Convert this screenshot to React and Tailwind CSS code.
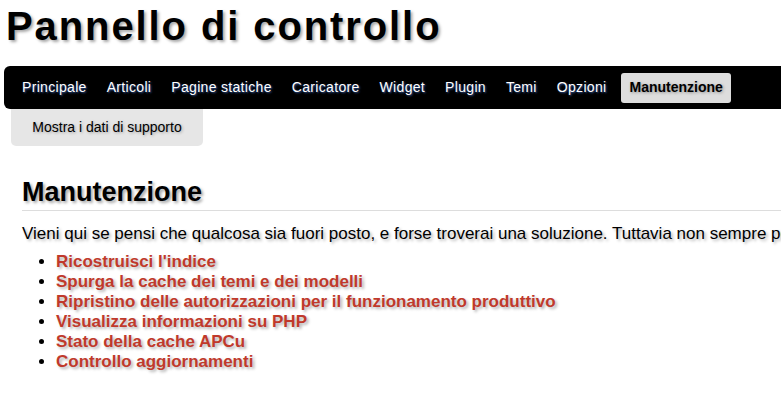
import React from 'react';

const tabs = ['Principale', 'Articoli', 'Pagine statiche', 'Caricatore', 'Widget', 'Plugin', 'Temi', 'Opzioni'];

const links = [
    "Ricostruisci l'indice",
    'Spurga la cache dei temi e dei modelli',
    'Ripristino delle autorizzazioni per il funzionamento produttivo',
    'Visualizza informazioni su PHP',
    'Stato della cache APCu',
    'Controllo aggiornamenti'
];

export default function App() {
    return (
        <div className="w-[781px] h-[393px] overflow-hidden bg-white text-black font-['Liberation_Sans',Arial,sans-serif]">
            <h1 className="pl-[6px] pt-[2px] text-[40px] leading-[48px] font-bold tracking-[1.9px] [text-shadow:2px_2px_3px_rgba(0,0,0,0.35)]">
                Pannello di controllo
            </h1>

            {/* Main menu */}
            <div className="ml-[4px] mt-[16px] w-[1000px] h-[43px] bg-black rounded-l-[6px] flex items-center pl-[8px]">
                {tabs.map((t) => (
                    <span key={t} className="px-[10px] text-[14px] text-white tracking-[0.32px] [text-shadow:1px_1px_2px_rgba(80,140,255,0.6)]">
                        {t}
                    </span>
                ))}
                <span className="ml-[5px] h-[30px] px-[8px] flex items-center bg-[#dddddd] rounded-[3px] text-[14px] font-bold text-black [text-shadow:1px_1px_3px_rgba(0,0,0,0.35)]">
                    Manutenzione
                </span>
            </div>

            {/* Sub menu */}
            <div className="ml-[11px] w-[192px] h-[37px] bg-[#e6e6e6] rounded-b-[5px] flex items-center justify-center text-[14px] [text-shadow:1px_1px_3px_rgba(0,0,0,0.3)]">
                Mostra i dati di supporto
            </div>

            <div className="pl-[22px] pt-[30px]">
                <h2 className="text-[27px] leading-[32px] font-bold [text-shadow:2px_2px_3px_rgba(0,0,0,0.35)]">
                    Manutenzione
                </h2>
                <div className="mt-[2px] h-px bg-[#dddddd] w-[900px]" />
                <p className="mt-[13px] text-[17px] leading-[20px] whitespace-nowrap [text-shadow:2px_2px_3px_rgba(0,0,0,0.3)]">
                    Vieni qui se pensi che qualcosa sia fuori posto, e forse troverai una soluzione. Tuttavia non sempre possiamo aiutarti.
                </p>
                <ul className="mt-[8px] pl-[34px] list-disc text-[17px] leading-[20px]">
                    {links.map((l) => (
                        <li key={l} className="whitespace-nowrap">
                            <span className="font-bold text-[#c0392b] [text-shadow:2px_2px_3px_rgba(0,0,0,0.3)]">{l}</span>
                        </li>
                    ))}
                </ul>
            </div>
        </div>
    );
}
